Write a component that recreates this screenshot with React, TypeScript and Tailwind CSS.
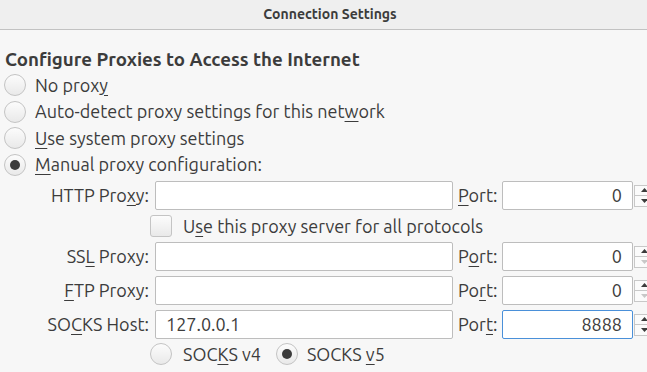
import type { ReactNode } from "react";

// mnemonic underline, like the GTK dialog shows them
function U({ children }: { children: ReactNode }) {
  return <span className="underline underline-offset-[3px] decoration-1">{children}</span>;
}

function Radio({ checked = false }: { checked?: boolean }) {
  return (
    <span className="flex h-[22px] w-[22px] shrink-0 items-center justify-center rounded-full border border-[#c4c4c4] bg-gradient-to-b from-[#fcfcfc] to-[#e9e9e9]">
      {checked && <span className="h-[10px] w-[10px] rounded-full bg-[#3c3c3c]" />}
    </span>
  );
}

function Spin({ downDisabled = false }: { downDisabled?: boolean }) {
  return (
    <div className="ml-[1px] flex w-[20px] shrink-0 flex-col">
      <div className="flex h-[11px] items-center justify-center border border-[#c8c8c8] bg-[#fbfbfb]">
        <svg width="7" height="4" viewBox="0 0 7 4">
          <path d="M0 4 L3.5 0 L7 4 Z" fill="#3c3c3c" />
        </svg>
      </div>
      <div className="flex h-[11px] items-center justify-center border border-t-0 border-[#c8c8c8] bg-[#fbfbfb]">
        <svg width="7" height="4" viewBox="0 0 7 4">
          <path d="M0 0 L3.5 4 L7 0 Z" fill={downDisabled ? "#c8c8c8" : "#3c3c3c"} />
        </svg>
      </div>
    </div>
  );
}

function ProxyRow({
  label,
  port,
  host = "",
  value,
  focused = false,
  downDisabled = false,
}: {
  label: ReactNode;
  port: ReactNode;
  host?: string;
  value: string;
  focused?: boolean;
  downDisabled?: boolean;
}) {
  return (
    <div className="flex h-[29px] items-center">
      <span className="w-[149px] shrink-0 whitespace-nowrap text-right">{label}</span>
      <div className="ml-[6px] flex h-[29px] w-[298px] shrink-0 items-center rounded-[2px] border border-[#bdbdbd] bg-white pl-[10px]">
        {host}
      </div>
      <span className="ml-[5px] w-[44px] shrink-0 whitespace-nowrap">{port}</span>
      <div
        className={`flex h-[29px] w-[131px] shrink-0 items-center justify-end rounded-[2px] border bg-white pr-[10px] ${
          focused ? "border-[#4a90d9]" : "border-[#bdbdbd]"
        }`}
      >
        {value}
      </div>
      <Spin downDisabled={downDisabled} />
    </div>
  );
}

export default function App() {
  return (
    <div className="h-[372px] w-[647px] overflow-hidden bg-[#f7f7f7] font-['Ubuntu','Open_Sans','Noto_Sans',sans-serif] text-[18px] text-[#3c3c3c]">
      <div className="flex h-[30px] items-center justify-center border-b border-[#c2c2c2] bg-[#efefef] pl-[13px] text-[14px] font-bold">
        Connection Settings
      </div>

      <div className="flex flex-col px-[4px]">
        <div className="mt-[19px] flex h-[23px] items-center pl-[1px] text-[18.7px] font-bold">
          Configure Proxies to Access the Internet
        </div>

        <div className="flex h-[26px] items-center gap-[9px]">
          <Radio />
          <span>
            No prox<U>y</U>
          </span>
        </div>
        <div className="flex h-[27px] items-center gap-[9px]">
          <Radio />
          <span>
            Auto-detect proxy settings for this net<U>w</U>ork
          </span>
        </div>
        <div className="flex h-[26px] items-center gap-[9px]">
          <Radio />
          <span>
            <U>U</U>se system proxy settings
          </span>
        </div>
        <div className="flex h-[27px] items-center gap-[9px]">
          <Radio checked />
          <span>
            <U>M</U>anual proxy configuration:
          </span>
        </div>

        <div className="mt-[3px] -ml-[4px] flex flex-col gap-[5px]">
          <ProxyRow
            label={
              <>
                HTTP Pro<U>x</U>y:
              </>
            }
            port={
              <>
                <U>P</U>ort:
              </>
            }
            value="0"
          />
          <div className="flex h-[22px] items-center pl-[150px]">
            <span className="h-[22px] w-[22px] shrink-0 rounded-[3px] border border-[#c4c4c4] bg-gradient-to-b from-[#fcfcfc] to-[#e9e9e9]" />
            <span className="ml-[11px]">
              U<U>s</U>e this proxy server for all protocols
            </span>
          </div>
          <ProxyRow
            label={
              <>
                SS<U>L</U> Proxy:
              </>
            }
            port={
              <>
                P<U>o</U>rt:
              </>
            }
            value="0"
            downDisabled
          />
          <ProxyRow
            label={
              <>
                <U>F</U>TP Proxy:
              </>
            }
            port={
              <>
                Po<U>r</U>t:
              </>
            }
            value="0"
            downDisabled
          />
          <ProxyRow
            label={
              <>
                SO<U>C</U>KS Host:
              </>
            }
            port={
              <>
                Por<U>t</U>:
              </>
            }
            host="127.0.0.1"
            value="8888"
            focused
          />
          <div className="-mt-[1px] flex h-[22px] items-center pl-[150px]">
            <Radio />
            <span className="ml-[11px]">
              SOC<U>K</U>S v4
            </span>
            <span className="ml-[15px]">
              <Radio checked />
            </span>
            <span className="ml-[9px]">
              SOCKS <U>v</U>5
            </span>
          </div>
        </div>
      </div>
    </div>
  );
}
